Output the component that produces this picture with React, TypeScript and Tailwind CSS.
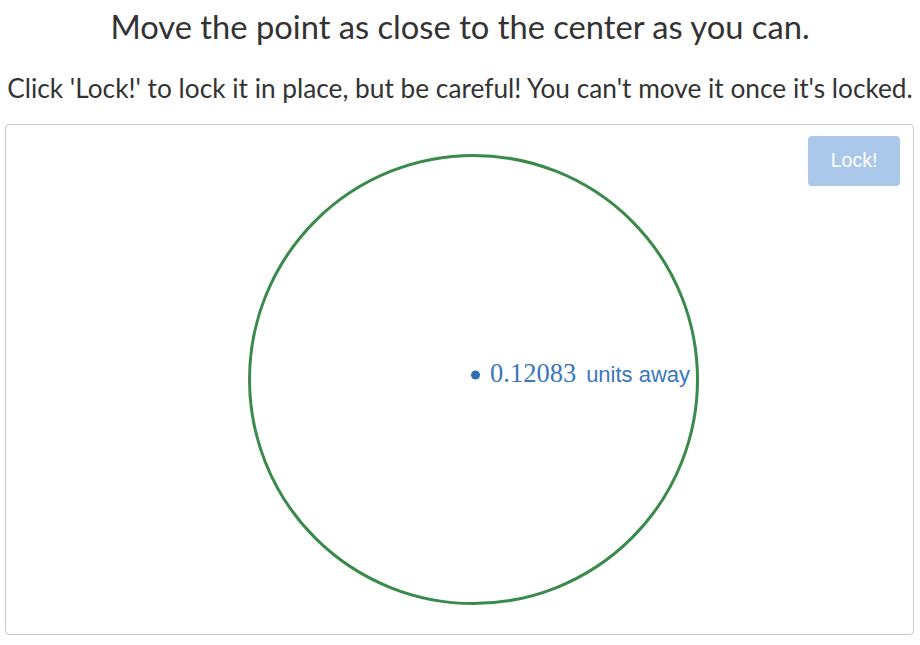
import React from "react";

export default function App() {
  return (
    <div className="w-[920px] h-[645px] bg-white text-[#333333]" style={{ fontFamily: "Lato, 'Noto Sans', sans-serif" }}>
      <h1 className="text-center text-[32.7px] leading-[36px] pt-[9px] font-normal">
        Move the point as close to the center as you can.
      </h1>
      <p className="text-center text-[26.25px] leading-[30px] mt-[28px] whitespace-nowrap">
        Click 'Lock!' to lock it in place, but be careful! You can't move it once it's locked.
      </p>
      <div className="relative mx-[5px] mt-[21px] w-[909px] h-[511px] border border-[#c8c8c8] rounded-[4px]">
        <svg className="absolute left-0 top-0" width="907" height="509" viewBox="0 0 907 509">
          <circle cx="467.5" cy="254.5" r="224" fill="none" stroke="#3a8a4c" strokeWidth="3" />
          <circle cx="469.5" cy="250" r="4.5" fill="#2f6db5" />
        </svg>
        <div className="absolute left-[484px] top-[229px] flex items-baseline gap-[10px] text-[#3a76bd]">
          <span className="text-[26.5px]" style={{ fontFamily: "'Liberation Serif', 'DejaVu Serif', serif" }}>0.12083</span>
          <span className="text-[22px]" style={{ fontFamily: "'Liberation Sans', Arial, sans-serif" }}>units away</span>
        </div>
        <button className="absolute right-[13px] top-[11px] w-[92px] h-[50px] rounded-[4px] bg-[#aac8ea] text-white text-[19.5px]" style={{ fontFamily: "'Liberation Sans', Arial, sans-serif" }}>
          Lock!
        </button>
      </div>
    </div>
  );
}
